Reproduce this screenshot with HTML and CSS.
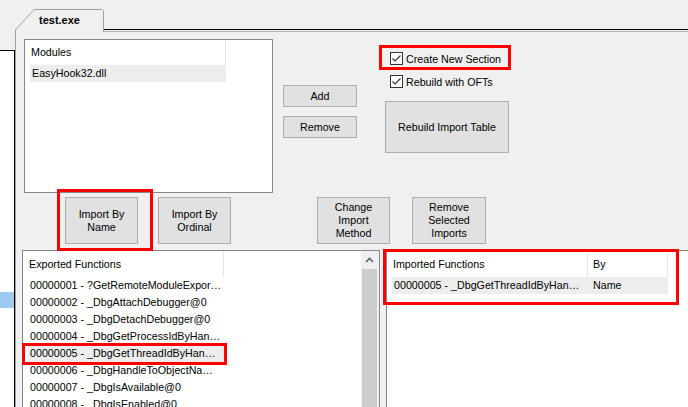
FILE: index.html
```html
<!DOCTYPE html>
<html>
<head>
<meta charset="utf-8">
<title>test.exe</title>
<link rel="stylesheet" href="styles.css">
</head>
<body>
<div class="window">
  <div class="tabstrip">
    <div class="tab-gap"></div>
    <div class="tab"><div class="tab-in">test.exe</div></div>
    <div class="tabline"><div class="tabline-dark"></div></div>
  </div>
  <div class="main">
    <div class="side"><div class="side-box"><div class="side-sel"></div></div></div>
    <div class="panel">
      <div class="top">
        <div class="list modules">
          <div class="lv-head"><div class="hcol">Modules</div></div>
          <div class="lv-row sel"><div class="cell">EasyHook32.dll</div></div>
        </div>
        <div class="mod-btns">
          <button class="btn small">Add</button>
          <button class="btn small">Remove</button>
        </div>
        <div class="options">
          <div class="check"><span class="box"><svg width="11" height="11" viewBox="0 0 11 11"><polyline points="1.5,5.5 4,8 9.5,2.5" fill="none" stroke="#333" stroke-width="1.2"/></svg></span>Create New Section</div>
          <div class="check"><span class="box"><svg width="11" height="11" viewBox="0 0 11 11"><polyline points="1.5,5.5 4,8 9.5,2.5" fill="none" stroke="#333" stroke-width="1.2"/></svg></span>Rebuild with OFTs</div>
          <button class="btn rebuild">Rebuild Import Table</button>
        </div>
      </div>
      <div class="actions">
        <button class="btn tall">Import By<br>Name</button>
        <button class="btn tall b-ordinal">Import By<br>Ordinal</button>
        <button class="btn tall b-change">Change<br>Import<br>Method</button>
        <button class="btn tall b-remove">Remove<br>Selected<br>Imports</button>
      </div>
      <div class="lists">
        <div class="list exported">
          <div class="lv-body">
            <div class="lv-head tall-head"><div class="hcol">Exported Functions</div></div>
            <div class="lv-row"><div class="cell">00000001 - ?GetRemoteModuleExpor…</div></div>
            <div class="lv-row"><div class="cell">00000002 - _DbgAttachDebugger@0</div></div>
            <div class="lv-row"><div class="cell">00000003 - _DbgDetachDebugger@0</div></div>
            <div class="lv-row"><div class="cell">00000004 - _DbgGetProcessIdByHan…</div></div>
            <div class="lv-row sel"><div class="cell">00000005 - _DbgGetThreadIdByHan…</div></div>
            <div class="lv-row"><div class="cell">00000006 - _DbgHandleToObjectNa…</div></div>
            <div class="lv-row"><div class="cell">00000007 - _DbgIsAvailable@0</div></div>
            <div class="lv-row"><div class="cell">00000008 - _DbgIsEnabled@0</div></div>
          </div>
          <div class="vscroll">
            <div class="scroll-up"><svg width="9" height="6" viewBox="0 0 9 6"><polyline points="1,5 4.5,1.5 8,5" fill="none" stroke="#606060" stroke-width="1.6"/></svg></div>
            <div class="scroll-thumb"></div>
          </div>
        </div>
        <div class="list imported">
          <div class="lv-head tall-head"><div class="hcol">Imported Functions</div><div class="hcol narrow">By</div></div>
          <div class="lv-row sel"><div class="cell">00000005 - _DbgGetThreadIdByHan…</div><div class="cell narrow">Name</div></div>
        </div>
      </div>
    </div>
  </div>
  <div class="mark mark-section"></div>
  <div class="mark mark-name"></div>
  <div class="mark mark-row"></div>
  <div class="mark mark-imported"></div>
</div>
</body>
</html>
```

FILE: styles.css
```css
* { box-sizing: border-box; }
html, body { margin: 0; padding: 0; }
body {
  background: #f0f0f0;
  font-family: "Liberation Sans", Arial, sans-serif;
  font-size: 10.7px;
  color: #000;
  overflow: hidden;
}
.window {
  position: relative;
  width: 688px;
  height: 407px;
  overflow: hidden;
  background: #f0f0f0;
}

/* tab strip */
.tabstrip { display: flex; height: 32px; }
.tab-gap { width: 15px; flex-shrink: 0; }
.tab {
  width: 89px;
  height: 23px;
  flex-shrink: 0;
  margin-top: 9px;
  background: #a0a0a0;
  padding: 1px 1px 0 1px;
  clip-path: polygon(0 21px, 19px 0, 87px 0, 89px 2px, 89px 100%, 0 100%);
}
.tab-in {
  height: 100%;
  background: #f0f0f0;
  clip-path: polygon(0 20px, 18px 0, 100% 0, 100% 100%, 0 100%);
  padding: 4px 0 0 23px;
  font-weight: bold;
  font-size: 11px;
  line-height: 13px;
}
.tabline { flex: 1; height: 32px; border-bottom: 1px solid #b4b4b4; }
.tabline-dark { height: 30px; border-bottom: 1px solid #000; }

/* body */
.main { display: flex; height: 375px; }
.side { width: 15px; flex-shrink: 0; padding-top: 18px; }
.side-box {
  height: 100%;
  background: #fff;
  border-top: 1px solid #000;
  border-right: 1px solid #000;
  padding-top: 241px;
}
.side-sel { height: 16px; background: #9dcaee; }
.panel {
  flex: 1;
  min-width: 0;
  overflow: hidden;
  border-left: 1px solid #a0a0a0;
  display: flex;
  flex-direction: column;
}

.top { display: flex; height: 161px; flex-shrink: 0; }

/* list views */
.list { background: #fff; border: 1px solid #828790; overflow: hidden; flex-shrink: 0; }
.modules { margin: 7px 0 0 8px; width: 249px; height: 154px; }
.lv-head { display: flex; height: 25px; }
.lv-head.tall-head { height: 26px; }
.hcol {
  width: 201px;
  flex-shrink: 0;
  border-right: 1px solid #e5e5e5;
  padding-left: 6px;
  line-height: 25px;
  white-space: nowrap;
}
.tall-head .hcol { line-height: 26px; }
.hcol.narrow { width: 80px; padding-left: 5px; }
.lv-row { display: flex; margin-left: 5px; height: 17px; line-height: 17px; width: max-content; }
.lv-row.sel { background: #ededed; }
.cell {
  width: 196px;
  flex-shrink: 0;
  padding-left: 2px;
  white-space: nowrap;
}
.cell.narrow { width: 80px; padding-left: 5px; }

/* buttons */
.btn {
  font: inherit;
  color: #000;
  background: #e1e1e1;
  border: 1px solid #adadad;
  border-radius: 0;
  padding: 0;
  margin: 0;
  line-height: 13px;
  text-align: center;
  flex-shrink: 0;
}
.small { width: 74px; height: 22px; }
.mod-btns {
  margin: 53px 0 0 10px;
  display: flex;
  flex-direction: column;
  gap: 9px;
}
.options {
  margin: 18px 0 0 28px;
  display: flex;
  flex-direction: column;
  align-items: flex-start;
}
.check {
  display: flex;
  align-items: center;
  height: 17px;
  padding-left: 5px;
  white-space: nowrap;
}
.check + .check { margin-top: 6px; }
.box {
  width: 13px;
  height: 13px;
  border: 1px solid #333;
  background: #fff;
  margin-right: 3px;
  display: flex;
}
.rebuild { width: 124px; height: 52px; margin-top: 11px; }

.actions { display: flex; margin-top: 4px; height: 47px; padding-left: 49px; flex-shrink: 0; }
.tall { width: 73px; height: 47px; }
.b-ordinal { margin-left: 20px; }
.b-change { margin-left: 86px; }
.b-remove { margin-left: 22px; width: 74px; }

.lists { display: flex; margin-top: 6px; }
.exported { margin-left: 6px; width: 358px; height: 170px; display: flex; }
.lv-body { flex: 1; }
.vscroll {
  width: 18px;
  display: flex;
  flex-direction: column;
  background: #f0f0f0;
}
.scroll-up {
  height: 18px;
  display: flex;
  align-items: center;
  justify-content: center;
  padding-right: 2px;
}
.scroll-thumb { flex: 1; width: 15px; margin-left: 1px; background: #cdcdcd; }
.imported { margin-left: 6px; width: 320px; height: 170px; }

/* annotation boxes */
.mark { position: absolute; border: 3px solid #ff0000; pointer-events: none; }
.mark-section { left: 379px; top: 45px; width: 132px; height: 25px; }
.mark-name { left: 57px; top: 189px; width: 96px; height: 62px; }
.mark-row { left: 22px; top: 343px; width: 205px; height: 22px; }
.mark-imported { left: 383px; top: 249px; width: 296px; height: 56px; }
```
